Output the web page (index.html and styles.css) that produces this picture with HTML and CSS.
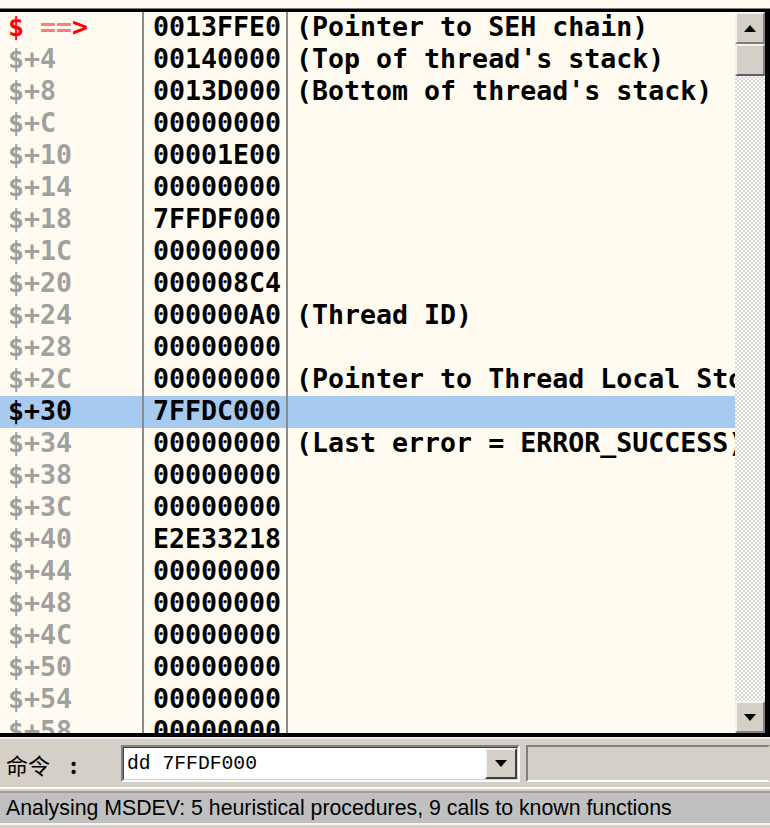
FILE: index.html
```html
<!DOCTYPE html>
<html>
<head>
<meta charset="utf-8">
<link rel="stylesheet" href="styles.css">
</head>
<body>
<div class="app">
  <div class="top-strip"></div>
  <div class="pane">
    <div class="list">
      <div class="row"><span class="c addr red">$ <span class="eq">==</span>&gt;</span><span class="c val">0013FFE0</span><span class="c cmt">(Pointer to SEH chain)</span></div>
      <div class="row"><span class="c addr">$+4</span><span class="c val">00140000</span><span class="c cmt">(Top of thread's stack)</span></div>
      <div class="row"><span class="c addr">$+8</span><span class="c val">0013D000</span><span class="c cmt">(Bottom of thread's stack)</span></div>
      <div class="row"><span class="c addr">$+C</span><span class="c val">00000000</span><span class="c cmt"></span></div>
      <div class="row"><span class="c addr">$+10</span><span class="c val">00001E00</span><span class="c cmt"></span></div>
      <div class="row"><span class="c addr">$+14</span><span class="c val">00000000</span><span class="c cmt"></span></div>
      <div class="row"><span class="c addr">$+18</span><span class="c val">7FFDF000</span><span class="c cmt"></span></div>
      <div class="row"><span class="c addr">$+1C</span><span class="c val">00000000</span><span class="c cmt"></span></div>
      <div class="row"><span class="c addr">$+20</span><span class="c val">000008C4</span><span class="c cmt"></span></div>
      <div class="row"><span class="c addr">$+24</span><span class="c val">000000A0</span><span class="c cmt">(Thread ID)</span></div>
      <div class="row"><span class="c addr">$+28</span><span class="c val">00000000</span><span class="c cmt"></span></div>
      <div class="row"><span class="c addr">$+2C</span><span class="c val">00000000</span><span class="c cmt">(Pointer to Thread Local Storage)</span></div>
      <div class="row sel"><span class="c addr">$+30</span><span class="c val">7FFDC000</span><span class="c cmt"></span></div>
      <div class="row"><span class="c addr">$+34</span><span class="c val">00000000</span><span class="c cmt">(Last error = ERROR_SUCCESS)</span></div>
      <div class="row"><span class="c addr">$+38</span><span class="c val">00000000</span><span class="c cmt"></span></div>
      <div class="row"><span class="c addr">$+3C</span><span class="c val">00000000</span><span class="c cmt"></span></div>
      <div class="row"><span class="c addr">$+40</span><span class="c val">E2E33218</span><span class="c cmt"></span></div>
      <div class="row"><span class="c addr">$+44</span><span class="c val">00000000</span><span class="c cmt"></span></div>
      <div class="row"><span class="c addr">$+48</span><span class="c val">00000000</span><span class="c cmt"></span></div>
      <div class="row"><span class="c addr">$+4C</span><span class="c val">00000000</span><span class="c cmt"></span></div>
      <div class="row"><span class="c addr">$+50</span><span class="c val">00000000</span><span class="c cmt"></span></div>
      <div class="row"><span class="c addr">$+54</span><span class="c val">00000000</span><span class="c cmt"></span></div>
      <div class="row"><span class="c addr">$+58</span><span class="c val">00000000</span><span class="c cmt"></span></div>
    </div>
    <div class="scrollbar">
      <div class="sbtn"><svg width="12" height="7" viewBox="0 0 12 7"><polygon points="6,0 12,7 0,7" fill="#000"/></svg></div>
      <div class="sbtn thumb"></div>
      <div class="track"></div>
      <div class="sbtn"><svg width="12" height="7" viewBox="0 0 12 7"><polygon points="0,0 12,0 6,7" fill="#000"/></svg></div>
    </div>
  </div>
  <div class="cmdbar">
    <div class="label"><span class="cjk">命令</span><span class="colon">:</span></div>
    <div class="combo">
      <div class="combo-in">
        <span class="cmd-text">dd 7FFDF000</span>
        <div class="dd-btn"><svg width="12" height="7" viewBox="0 0 12 7"><polygon points="0,0 12,0 6,7" fill="#000"/></svg></div>
      </div>
    </div>
    <div class="info"></div>
  </div>
  <div class="sep"></div>
  <div class="status">Analysing MSDEV: 5 heuristical procedures, 9 calls to known functions</div>
  <div class="bottom"></div>
</div>
</body>
</html>
```

FILE: styles.css
```css
html, body {
  margin: 0;
  padding: 0;
}
body {
  width: 770px;
  height: 828px;
  overflow: hidden;
  background: #d4d0c8;
}
.app {
  width: 770px;
  height: 828px;
  display: flex;
  flex-direction: column;
}
.top-strip {
  height: 8px;
  background: #fffbf0;
  border-bottom: 1px solid #808080;
}
.pane {
  display: flex;
  height: 721px;
  border-top: 3px solid #000;
  border-bottom: 4px solid #000;
  border-right: 5px solid #000;
  background: #fffbf0;
}
.list {
  flex: 1;
  overflow: hidden;
  font-family: "DejaVu Sans Mono", monospace;
  font-weight: bold;
  font-size: 26.6px;
}
.row {
  display: grid;
  grid-template-columns: 142px 144px 1fr;
  height: 32px;
}
.row.sel {
  background: #a6caf0;
}
.c {
  display: block;
  height: 32px;
  line-height: 30px;
  white-space: nowrap;
  overflow: hidden;
  box-sizing: border-box;
}
.addr {
  padding-left: 8px;
  color: #a0a0a0;
}
.addr.red {
  color: #ff0000;
}
.addr .eq {
  color: #ff7a7a;
}
.row.sel .addr {
  color: #000;
}
.val {
  border-left: 2px solid #8c8c8c;
  padding-left: 9px;
  color: #000;
}
.cmt {
  border-left: 2px solid #8c8c8c;
  padding-left: 8px;
  color: #000;
}
.scrollbar {
  width: 30px;
  display: flex;
  flex-direction: column;
}
.sbtn {
  height: 32px;
  box-sizing: border-box;
  background: #d4d0c8;
  border: 2px solid;
  border-color: #f4f3ef #808080 #808080 #f4f3ef;
  display: flex;
  align-items: center;
  justify-content: center;
}
.sbtn.thumb {
  border-bottom-color: #606060;
}
.track {
  flex: 1;
  background: repeating-conic-gradient(#dcdad5 0 25%, #f6f6f6 0 50%) 0 0 / 4px 4px;
}
.cmdbar {
  height: 48px;
  border-top: 2px solid #ecebe7;
  display: flex;
  align-items: flex-start;
  padding-top: 6px;
  box-sizing: border-box;
  height: 50px;
}
.label {
  width: 121px;
  height: 37px;
  display: flex;
  align-items: center;
  padding-left: 6px;
  box-sizing: border-box;
  font-family: "Noto Sans CJK SC", sans-serif;
  font-size: 22px;
  color: #000;
}
.colon {
  margin-left: 20px;
  font-weight: bold;
}
.combo {
  width: 399px;
  height: 37px;
  box-sizing: border-box;
  border: 2px solid;
  border-color: #808080 #ffffff #ffffff #808080;
}
.combo-in {
  height: 100%;
  box-sizing: border-box;
  border: 1px solid;
  border-color: #404040 #d4d0c8 #d4d0c8 #404040;
  background: #fff;
  display: flex;
  align-items: center;
}
.cmd-text {
  flex: 1;
  padding-left: 3px;
  font-family: "Liberation Mono", monospace;
  font-size: 19.7px;
  color: #000;
}
.dd-btn {
  width: 32px;
  height: 100%;
  box-sizing: border-box;
  background: #d4d0c8;
  border: 2px solid;
  border-color: #f4f3ef #404040 #404040 #f4f3ef;
  display: flex;
  align-items: center;
  justify-content: center;
}
.info {
  flex: 1;
  margin-left: 6px;
  height: 37px;
  box-sizing: border-box;
  border: 2px solid;
  border-color: #808080 #d4d0c8 #ffffff #808080;
  background: #d4d0c8;
}
.sep {
  height: 2px;
  background: #ffffff;
  margin-bottom: 2px;
}
.status {
  height: 30px;
  border-top: 2px solid #a0a0a0;
  border-bottom: 2px solid #f4f4f4;
  background: #c0c0c0;
  padding-left: 6px;
  font-family: "Liberation Sans", Arial, sans-serif;
  font-size: 21.3px;
  line-height: 30px;
  color: #000;
  white-space: nowrap;
  overflow: hidden;
}
.bottom {
  flex: 1;
  background: #d4d0c8;
}
```
